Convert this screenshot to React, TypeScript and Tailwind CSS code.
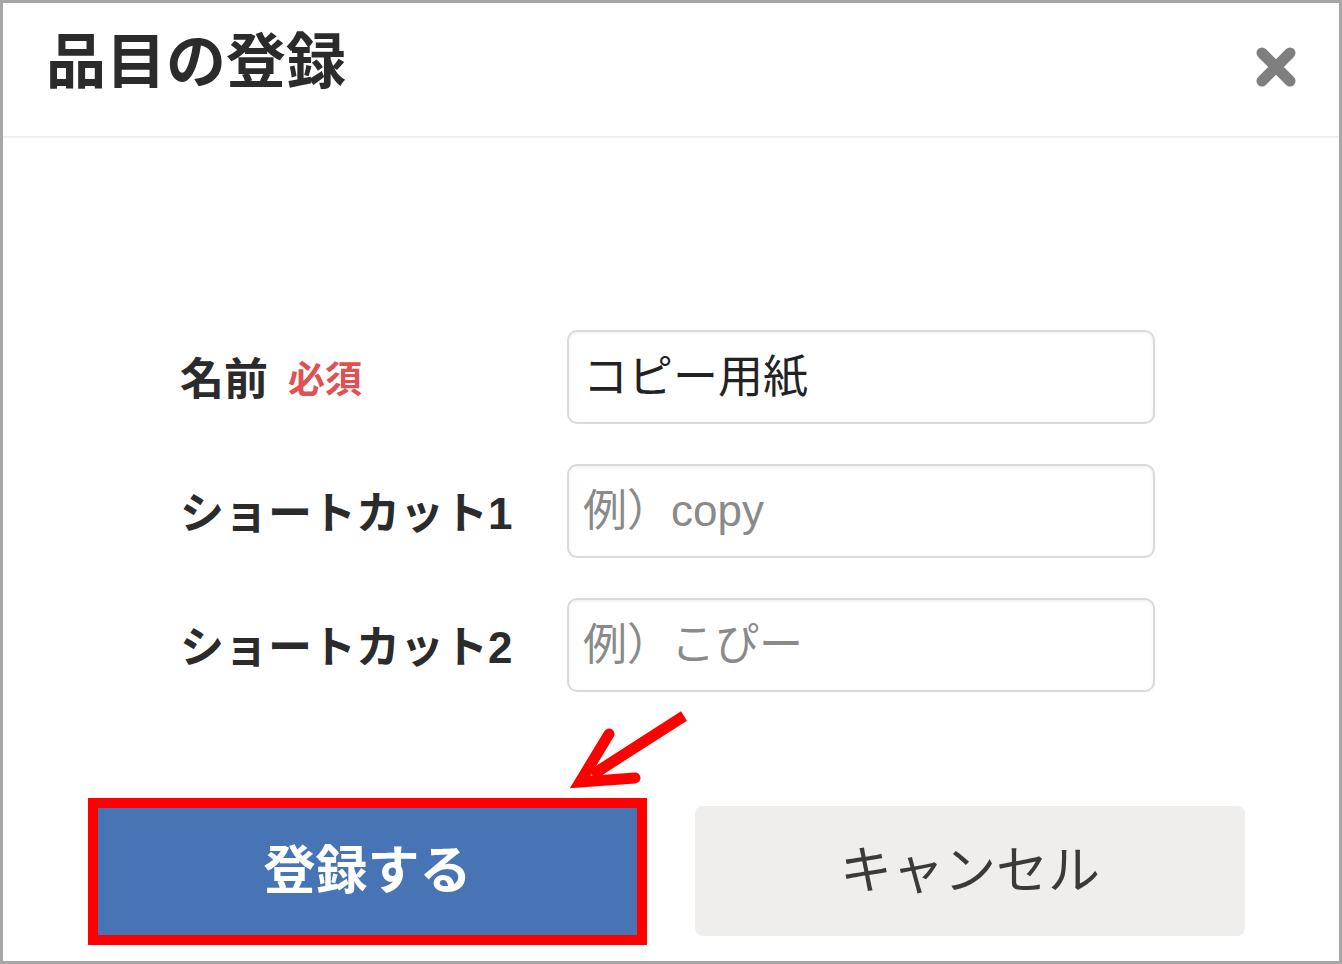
import React from "react";

const FONT = {
  fontFamily: '"Liberation Sans", "Noto Sans CJK JP", sans-serif',
};

function CloseIcon() {
  return (
    <svg width="44" height="44" viewBox="0 0 44 44" className="-mt-[6px]">
      <path
        d="M8 8 L36 36 M36 8 L8 36"
        stroke="#7f7f7f"
        strokeWidth="11"
        strokeLinecap="round"
        fill="none"
      />
    </svg>
  );
}

function Row({
  label,
  required,
  value,
  placeholder,
}: {
  label: string;
  required?: boolean;
  value?: string;
  placeholder?: string;
}) {
  return (
    <div className="flex items-center">
      <div className="w-[387px] flex items-center pt-[6px]">
        <span className="text-[44px] font-bold text-[#2b2b2b] leading-none">{label}</span>
        {required && (
          <span className="ml-[20px] text-[37px] font-bold text-[#e25151] leading-none">必須</span>
        )}
      </div>
      <div className="w-[588px] h-[94px] rounded-[10px] border-2 border-[#dadada] bg-white shadow-[inset_0_1px_3px_rgba(0,0,0,0.08)] flex items-center pl-[14px]">
        {value ? (
          <span className="text-[45px] text-[#222222] leading-none">{value}</span>
        ) : (
          <span className="text-[44px] text-[#8a8a8a] leading-none">{placeholder}</span>
        )}
      </div>
    </div>
  );
}

export default function App() {
  return (
    <div
      className="relative w-[1342px] h-[964px] bg-white border-[3px] border-[#a6a6a6] flex flex-col"
      style={FONT}
    >
      <div className="h-[135px] border-b-2 border-[#f1f1f1] flex items-center justify-between pl-[43px] pr-[41px]">
        <h1 className="text-[60px] font-bold text-[#2b2b2b] leading-none -mt-[14px]">品目の登録</h1>
        <CloseIcon />
      </div>

      <div className="flex flex-col pl-[177px] mt-[192px] gap-[40px]">
        <Row label="名前" required value="コピー用紙" />
        <Row label="ショートカット1" placeholder="例）copy" />
        <Row label="ショートカット2" placeholder="例）こぴー" />
      </div>

      <div className="flex items-center pl-[95px] mt-[114px] gap-[58px]">
        <button className="w-[539px] h-[127px] bg-[#4674b4] outline-[10px] outline-solid outline-[#ff0000] flex items-center justify-center">
          <span className="text-[52px] font-bold text-white leading-none">登録する</span>
        </button>
        <button className="w-[550px] h-[130px] bg-[#efeeed] rounded-[8px] flex items-center justify-center">
          <span className="text-[52px] text-[#3a3a3a] leading-none">キャンセル</span>
        </button>
      </div>

      <svg
        className="absolute pointer-events-none"
        width="1342"
        height="964"
        viewBox="0 0 1342 964"
        style={{ left: -3, top: -3 }}
      >
        <path d="M684 716 L592 775" stroke="#ff0000" strokeWidth="11" fill="none" />
        <path
          d="M609 734 L580 782 L635 778"
          stroke="#ff0000"
          strokeWidth="11"
          strokeLinecap="round"
          strokeLinejoin="miter"
          fill="none"
        />
      </svg>
    </div>
  );
}
